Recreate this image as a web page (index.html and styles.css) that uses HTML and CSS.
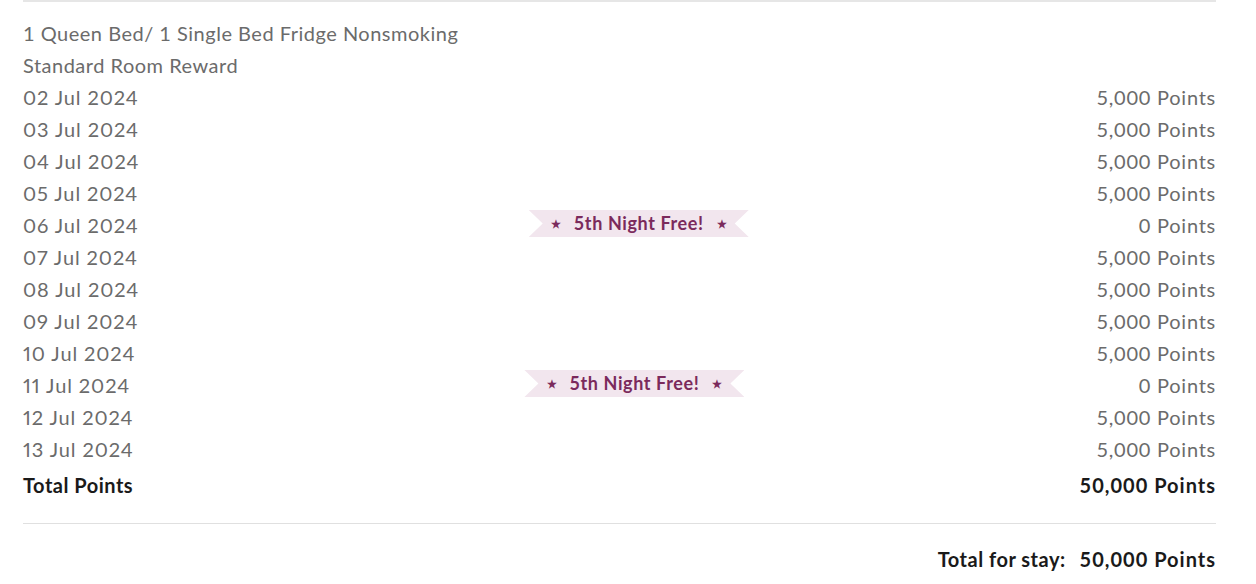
FILE: index.html
```html
<!DOCTYPE html>
<html>
<head>
<meta charset="utf-8">
<link rel="stylesheet" href="styles.css">
</head>
<body>
<div class="summary">
  <div class="list">
    <div class="row"><span class="desc">1 Queen Bed/ 1 Single Bed Fridge Nonsmoking</span></div>
    <div class="row"><span class="desc">Standard Room Reward</span></div>
    <div class="row"><span class="label">02 Jul 2024</span><span class="mid"></span><span class="pts">5,000 Points</span></div>
    <div class="row"><span class="label">03 Jul 2024</span><span class="mid"></span><span class="pts">5,000 Points</span></div>
    <div class="row"><span class="label">04 Jul 2024</span><span class="mid"></span><span class="pts">5,000 Points</span></div>
    <div class="row"><span class="label">05 Jul 2024</span><span class="mid"></span><span class="pts">5,000 Points</span></div>
    <div class="row"><span class="label">06 Jul 2024</span><span class="mid"><span class="ribbon"><span class="star">★</span>5th Night Free!<span class="star">★</span></span></span><span class="pts">0 Points</span></div>
    <div class="row"><span class="label">07 Jul 2024</span><span class="mid"></span><span class="pts">5,000 Points</span></div>
    <div class="row"><span class="label">08 Jul 2024</span><span class="mid"></span><span class="pts">5,000 Points</span></div>
    <div class="row"><span class="label">09 Jul 2024</span><span class="mid"></span><span class="pts">5,000 Points</span></div>
    <div class="row"><span class="label">10 Jul 2024</span><span class="mid"></span><span class="pts">5,000 Points</span></div>
    <div class="row"><span class="label">11 Jul 2024</span><span class="mid"><span class="ribbon"><span class="star">★</span>5th Night Free!<span class="star">★</span></span></span><span class="pts">0 Points</span></div>
    <div class="row"><span class="label">12 Jul 2024</span><span class="mid"></span><span class="pts">5,000 Points</span></div>
    <div class="row"><span class="label">13 Jul 2024</span><span class="mid"></span><span class="pts">5,000 Points</span></div>
    <div class="row total"><span class="label">Total Points</span><span class="mid"></span><span class="pts">50,000 Points</span></div>
  </div>
  <div class="stay">
    <span class="stay-label">Total for stay:</span><span class="stay-value">50,000 Points</span>
  </div>
</div>
</body>
</html>
```
FILE: styles.css
```css
html, body {
  margin: 0;
  padding: 0;
  background: #fff;
}
body {
  font-family: Lato, "Noto Sans", sans-serif;
  font-size: 20px;
  letter-spacing: 0.5px;
  color: #6b6b6b;
}
.summary {
  margin-left: 23px;
  width: 1193px;
  border-top: 2px solid #e6e6e6;
}
.list {
  padding-top: 15px;
  padding-bottom: 22px;
  border-bottom: 1px solid #e0e0e0;
}
.row {
  display: flex;
  align-items: center;
  height: 32px;
  line-height: 32px;
}
.desc {
  letter-spacing: 0.5px;
}
.label {
  font-variant-numeric: proportional-nums;
  letter-spacing: 0.9px;
}
.pts {
  letter-spacing: 0.75px;
}
.mid {
  flex: 1;
  display: flex;
  justify-content: center;
  align-items: center;
}
.total {
  margin-top: 4px;
  font-weight: 700;
  color: #1a1a1a;
}
.total .label {
  letter-spacing: 0.5px;
}
.total .pts {
  letter-spacing: 1px;
}
.ribbon {
  display: inline-flex;
  align-items: center;
  justify-content: center;
  gap: 13px;
  width: 220px;
  height: 27px;
  margin-top: -3px;
  background: #f2e6ee;
  color: #7b2a5c;
  font-weight: 700;
  font-size: 18px;
  letter-spacing: 0.6px;
  line-height: 27px;
  clip-path: polygon(0 0, 100% 0, calc(100% - 14px) 50%, 100% 100%, 0 100%, 14px 50%);
}
.star {
  font-size: 11px;
  letter-spacing: 0;
}
.stay {
  display: flex;
  justify-content: flex-end;
  gap: 14px;
  padding-top: 19px;
  height: 32px;
  line-height: 32px;
  font-weight: 700;
  color: #1a1a1a;
}
.stay-label {
  letter-spacing: 0.5px;
}
.stay-value {
  letter-spacing: 1px;
}
```
